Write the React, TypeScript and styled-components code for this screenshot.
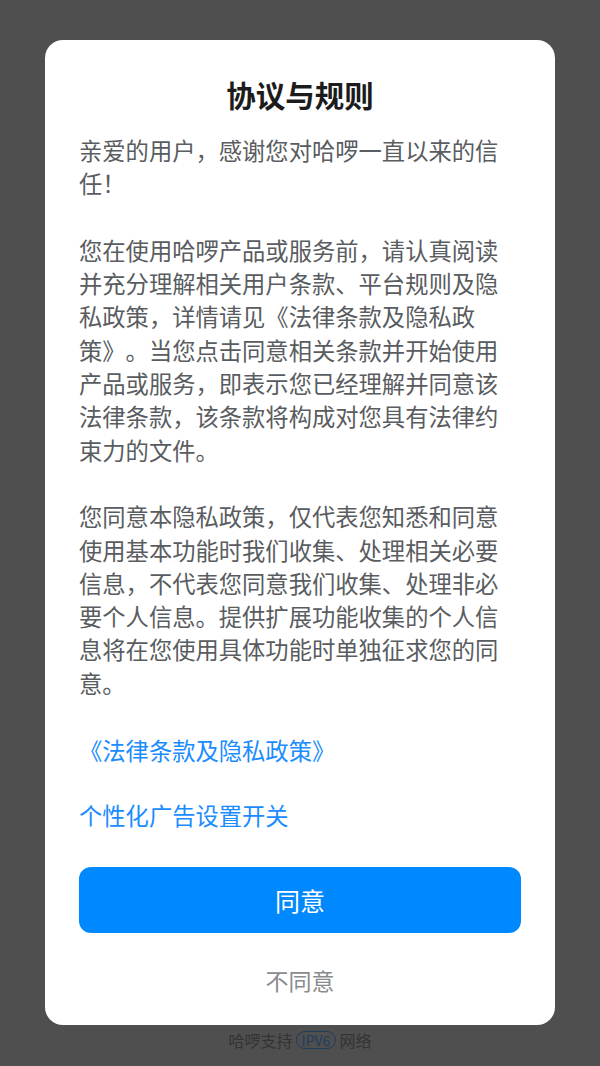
import { createGlobalStyle, styled } from 'styled-components';

const GlobalStyle = createGlobalStyle`
  html,
  body {
    margin: 0;
    padding: 0;
    background: #4f4f4f;
  }

  body {
    font-family: 'Noto Sans CJK SC', 'Noto Sans', sans-serif;
  }
`;

const PARAGRAPHS = [
  '亲爱的用户，感谢您对哈啰一直以来的信任！',
  '您在使用哈啰产品或服务前，请认真阅读并充分理解相关用户条款、平台规则及隐私政策，详情请见《法律条款及隐私政策》。当您点击同意相关条款并开始使用产品或服务，即表示您已经理解并同意该法律条款，该条款将构成对您具有法律约束力的文件。',
  '您同意本隐私政策，仅代表您知悉和同意使用基本功能时我们收集、处理相关必要信息，不代表您同意我们收集、处理非必要个人信息。提供扩展功能收集的个人信息将在您使用具体功能时单独征求您的同意。',
];

const LINKS = ['《法律条款及隐私政策》', '个性化广告设置开关'];

const App = () => {
  return (
    <Screen>
      <GlobalStyle />
      <Dialog>
        <Title>协议与规则</Title>
        <Body>
          {PARAGRAPHS.map(text => (
            <Paragraph key={text}>{text}</Paragraph>
          ))}
        </Body>
        <LinkList>
          {LINKS.map(label => (
            <LinkText key={label}>{label}</LinkText>
          ))}
        </LinkList>
        <AgreeButton type="button">同意</AgreeButton>
        <DisagreeButton type="button">不同意</DisagreeButton>
      </Dialog>
      <Footer>
        哈啰支持 <Badge>IPV6</Badge> 网络
      </Footer>
    </Screen>
  );
};

export default App;

const Screen = styled.div`
  display: flex;
  flex-direction: column;
  align-items: center;
  min-height: 1066px;
  padding-top: 40px;
  box-sizing: border-box;
`;

const Dialog = styled.div`
  display: flex;
  flex-direction: column;
  width: 510px;
  box-sizing: border-box;
  padding: 34px 34px 28px;
  background-color: #ffffff;
  border-radius: 18px;
`;

const Title = styled.h1`
  margin: 0;
  font-size: 29.5px;
  line-height: 40px;
  font-weight: 700;
  color: #1c1c1c;
  text-align: center;
`;

const Body = styled.div`
  display: flex;
  flex-direction: column;
  gap: 33.3px;
  margin-top: 20px;
`;

const Paragraph = styled.p`
  margin: 0;
  font-size: 23.3px;
  line-height: 33.3px;
  color: #595c60;
  line-break: strict;
  text-spacing-trim: space-all;
`;

const LinkList = styled.div`
  display: flex;
  flex-direction: column;
  gap: 32px;
  margin-top: 34px;
`;

const LinkText = styled.span`
  font-size: 23.3px;
  line-height: 33.3px;
  color: #1a8cff;
`;

const AgreeButton = styled.button`
  margin-top: 34px;
  height: 66px;
  width: 100%;
  border: none;
  border-radius: 12px;
  background-color: #0088ff;
  color: #ffffff;
  font-family: inherit;
  font-size: 25px;
  cursor: pointer;
`;

const DisagreeButton = styled.button`
  margin-top: 31px;
  padding: 0;
  border: none;
  background: none;
  font-family: inherit;
  font-size: 23px;
  line-height: 33.3px;
  color: #8a8c8f;
  cursor: pointer;
`;

const Footer = styled.div`
  display: flex;
  align-items: center;
  gap: 3px;
  margin-top: 2px;
  font-size: 16px;
  line-height: 26px;
  color: #333333;
`;

const Badge = styled.span`
  padding: 0 5px;
  border: 1.5px solid #1f3c5c;
  border-radius: 10px;
  font-size: 14px;
  line-height: 16px;
  color: #1f3c5c;
`;
